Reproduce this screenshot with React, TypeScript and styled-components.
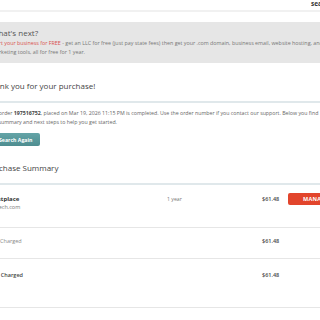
import styled, { createGlobalStyle } from 'styled-components'

const GlobalStyle = createGlobalStyle`
  html, body {
    margin: 0;
    padding: 0;
    background: #fff;
    overflow: hidden;
  }
  body {
    font-family: "Open Sans", "Noto Sans", sans-serif;
    color: #555;
  }
`

const items = [
  { name: 'Guestplace', domain: 'webtech.com', term: '1 year', price: '$61.48' }
]

const totals = [
  { label: 'Price Charged', price: '$61.48', strong: false, height: 31, top: 9 },
  { label: 'Total Charged', price: '$61.48', strong: true, height: 49, top: 12 }
]

function App () {
  return (
    <Page>
      <GlobalStyle />
      <TopBar>
        <TopLink>search</TopLink>
      </TopBar>
      <NextBox>
        <NextTitle>What&apos;s next?</NextTitle>
        <NextText>
          <Promo>Start your business for FREE</Promo> - get an LLC for free (just pay state fees) then get your .com domain, business email, website hosting, and marketing tools, all for free for 1 year.
        </NextText>
      </NextBox>
      <Heading $top={18} $bottom={10}>Thank you for your purchase!</Heading>
      <Intro>
        Your order <b>197516752</b>, placed on Mar 19, 2026 11:15 PM is completed. Use the order number if you contact our support. Below you find your summary and next steps to help you get started.
      </Intro>
      <SearchButton>Search Again</SearchButton>
      <Heading $top={17} $bottom={10}>Purchase Summary</Heading>
      <Table>
        {items.map(item => (
          <ItemRow key={item.name}>
            <div>
              <ItemName>{item.name}</ItemName>
              <ItemDomain>{item.domain}</ItemDomain>
            </div>
            <Term>{item.term}</Term>
            <Price>{item.price}</Price>
            <ManageButton>MANAGE</ManageButton>
          </ItemRow>
        ))}
        {totals.map(t => (
          <TotalRow key={t.label} $height={t.height} $top={t.top}>
            <TotalLabel $strong={t.strong}>{t.label}</TotalLabel>
            <Price>{t.price}</Price>
          </TotalRow>
        ))}
      </Table>
    </Page>
  )
}

const Page = styled.div`
  width: 374px;
  margin-left: -14px;
`
const TopBar = styled.div`
  height: 10px;
  border-bottom: solid 2px #f1f1f1;
  display: flex;
`
const TopLink = styled.span`
  margin-left: 325px;
  font-size: 6.5px;
  line-height: 8px;
  font-weight: 700;
  color: #333;
`
const NextBox = styled.section`
  margin-top: 10px;
  height: 41px;
  box-sizing: border-box;
  padding: 6px 36px 0 5px;
  background: #e6e6e6;
`
const NextTitle = styled.h2`
  margin: 0 0 1px 0;
  font-size: 8px;
  line-height: 10px;
  font-weight: 400;
  color: #555;
`
const NextText = styled.p`
  margin: 0;
  font-size: 5.35px;
  line-height: 9px;
  color: #777;
`
const Promo = styled.span`
  color: #d9534f;
`
const Heading = styled.h1<{ $top: number, $bottom: number }>`
  margin: 0;
  padding: ${p => p.$top}px 0 ${p => p.$bottom}px 0;
  font-size: 8px;
  line-height: 10px;
  font-weight: 400;
  color: #444;
  border-bottom: solid 2px #e0e8eb;
`
const Intro = styled.p`
  margin: 5.5px 0 0 0;
  padding-right: 36px;
  font-size: 5.25px;
  line-height: 9px;
  color: #666;

  b {
    color: #444;
  }
`
const SearchButton = styled.button`
  display: block;
  margin-top: 6.5px;
  height: 13px;
  padding: 0 8px 0 13px;
  border: none;
  border-radius: 2px;
  background: linear-gradient(#64a4a7, #4e8d90);
  color: #fff;
  font-family: inherit;
  font-size: 5.2px;
  font-weight: 700;
`
const Table = styled.div`
  display: flex;
  flex-direction: column;
`
const ItemRow = styled.div`
  display: grid;
  grid-template-columns: 181px 95px 26px auto;
  height: 43px;
  box-sizing: border-box;
  padding-top: 10px;
  border-bottom: solid 1px #e6e6e6;
`
const ItemName = styled.div`
  font-size: 6px;
  line-height: 8px;
  font-weight: 700;
  color: #333;
`
const ItemDomain = styled.div`
  font-size: 5.5px;
  line-height: 8px;
  color: #777;
`
const Term = styled.div`
  font-size: 5.2px;
  line-height: 8px;
  color: #777;
`
const Price = styled.div`
  font-size: 5.5px;
  line-height: 8px;
  font-weight: 600;
  color: #444;
`
const ManageButton = styled.button`
  justify-self: start;
  width: 56px;
  height: 12px;
  margin-top: -2px;
  border: none;
  border-radius: 2px;
  background: #e2452c;
  color: #fff;
  font-family: inherit;
  font-size: 5.5px;
  font-weight: 700;
  letter-spacing: 0.3px;
`
const TotalRow = styled.div<{ $height: number, $top: number }>`
  display: grid;
  grid-template-columns: 276px auto;
  height: ${p => p.$height}px;
  box-sizing: border-box;
  padding-top: ${p => p.$top}px;
  border-bottom: solid 1px #e6e6e6;
`
const TotalLabel = styled.div<{ $strong: boolean }>`
  font-size: 5.5px;
  line-height: 8px;
  font-weight: ${p => (p.$strong ? 600 : 400)};
  color: ${p => (p.$strong ? '#444' : '#888')};
`

export default App
